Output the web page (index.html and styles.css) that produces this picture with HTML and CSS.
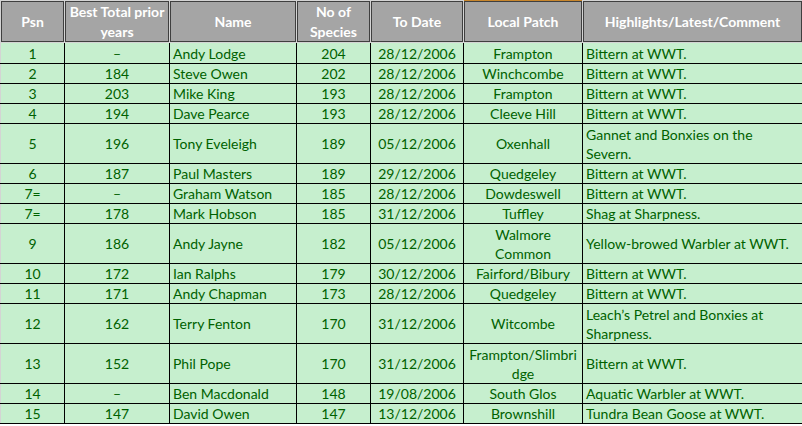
FILE: index.html
```html
<!DOCTYPE html>
<html>
<head>
<meta charset="utf-8">
<link rel="stylesheet" href="styles.css">
</head>
<body>
<table class="league">
<colgroup>
<col class="c-psn"><col class="c-best"><col class="c-name"><col class="c-spec"><col class="c-date"><col class="c-patch"><col class="c-comm">
</colgroup>
<thead>
<tr>
<th>Psn</th>
<th>Best Total prior<br>years</th>
<th>Name</th>
<th>No of<br>Species</th>
<th>To Date</th>
<th class="sel">Local Patch</th>
<th>Highlights/Latest/Comment</th>
</tr>
</thead>
<tbody>
<tr class="first"><td>1</td><td>–</td><td class="l">Andy Lodge</td><td>204</td><td>28/12/2006</td><td>Frampton</td><td class="l">Bittern at WWT.</td></tr>
<tr><td>2</td><td>184</td><td class="l">Steve Owen</td><td>202</td><td>28/12/2006</td><td>Winchcombe</td><td class="l">Bittern at WWT.</td></tr>
<tr><td>3</td><td>203</td><td class="l">Mike King</td><td>193</td><td>28/12/2006</td><td>Frampton</td><td class="l">Bittern at WWT.</td></tr>
<tr><td>4</td><td>194</td><td class="l">Dave Pearce</td><td>193</td><td>28/12/2006</td><td>Cleeve Hill</td><td class="l">Bittern at WWT.</td></tr>
<tr class="tall"><td>5</td><td>196</td><td class="l">Tony Eveleigh</td><td>189</td><td>05/12/2006</td><td>Oxenhall</td><td class="l">Gannet and Bonxies on the<br>Severn.</td></tr>
<tr><td>6</td><td>187</td><td class="l">Paul Masters</td><td>189</td><td>29/12/2006</td><td>Quedgeley</td><td class="l">Bittern at WWT.</td></tr>
<tr><td>7=</td><td>–</td><td class="l">Graham Watson</td><td>185</td><td>28/12/2006</td><td>Dowdeswell</td><td class="l">Bittern at WWT.</td></tr>
<tr><td>7=</td><td>178</td><td class="l">Mark Hobson</td><td>185</td><td>31/12/2006</td><td>Tuffley</td><td class="l">Shag at Sharpness.</td></tr>
<tr class="tall"><td>9</td><td>186</td><td class="l">Andy Jayne</td><td>182</td><td>05/12/2006</td><td>Walmore<br>Common</td><td class="l">Yellow-browed Warbler at WWT.</td></tr>
<tr><td>10</td><td>172</td><td class="l">Ian Ralphs</td><td>179</td><td>30/12/2006</td><td>Fairford/Bibury</td><td class="l">Bittern at WWT.</td></tr>
<tr><td>11</td><td>171</td><td class="l">Andy Chapman</td><td>173</td><td>28/12/2006</td><td>Quedgeley</td><td class="l">Bittern at WWT.</td></tr>
<tr class="tall"><td>12</td><td>162</td><td class="l">Terry Fenton</td><td>170</td><td>31/12/2006</td><td>Witcombe</td><td class="l">Leach’s Petrel and Bonxies at<br>Sharpness.</td></tr>
<tr class="tall"><td>13</td><td>152</td><td class="l">Phil Pope</td><td>170</td><td>31/12/2006</td><td>Frampton/Slimbri<br>dge</td><td class="l">Bittern at WWT.</td></tr>
<tr><td>14</td><td>–</td><td class="l">Ben Macdonald</td><td>148</td><td>19/08/2006</td><td>South Glos</td><td class="l">Aquatic Warbler at WWT.</td></tr>
<tr><td>15</td><td>147</td><td class="l">David Owen</td><td>147</td><td>13/12/2006</td><td>Brownshill</td><td class="l">Tundra Bean Goose at WWT.</td></tr>
</tbody>
</table>
</body>
</html>
```
FILE: styles.css
```css
html, body {
  margin: 0;
  padding: 0;
  background: #ffffff;
}
.league {
  border-collapse: collapse;
  table-layout: fixed;
  width: 802px;
  font-family: Lato, "Open Sans", sans-serif;
  font-size: 14px;
}
.c-psn { width: 64px; }
.c-best { width: 105px; }
.c-name { width: 127px; }
.c-spec { width: 74px; }
.c-date { width: 93px; }
.c-patch { width: 119px; }
.c-comm { width: 220px; }
.league th {
  background: #a5a5a5;
  color: #ffffff;
  font-weight: bold;
  height: 41px;
  padding: 0;
  line-height: 20px;
  border: 1px solid #d4d4d4;
  box-shadow: inset 0 0 0 1px #3f3f3f;
  text-align: center;
  vertical-align: middle;
  white-space: nowrap;
  overflow: hidden;
}
.league th.sel {
  border-top-color: #c8862c;
}
.league td {
  background: #c6efce;
  color: #006100;
  height: 19px;
  padding: 0 2px;
  line-height: 19px;
  border: 1px solid #000000;
  text-align: center;
  vertical-align: middle;
  white-space: nowrap;
  overflow: hidden;
}
.league td:first-child {
  border-left-color: #d4d4d4;
}
.league td.l {
  text-align: left;
  padding-left: 3px;
}
.league tr.first td {
  height: 20px;
}
.league tr.tall td {
  height: 39px;
}
```
